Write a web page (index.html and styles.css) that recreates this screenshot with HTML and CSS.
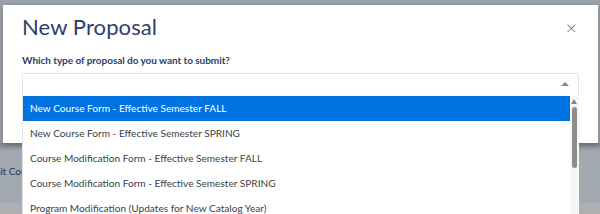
FILE: index.html
```html
<!DOCTYPE html>
<html lang="en">
<head>
  <meta charset="UTF-8">
  <meta name="viewport" content="width=device-width, initial-scale=1.0">
  <title>New Proposal</title>
  <link rel="stylesheet" href="styles.css">
</head>
<body>
  <!-- page behind the backdrop -->
  <div class="page">
    <div class="page-top"></div>
    <div class="page-row">
      <span class="page-link">Edit Course</span>
    </div>
    <div class="page-footer"></div>
  </div>

  <!-- modal -->
  <div class="modal">
    <div class="modal-header">
      <h1>New Proposal</h1>
      <span class="close">&times;</span>
    </div>
    <div class="modal-body">
      <label class="field-label">Which type of proposal do you want to submit?</label>
      <div class="select">
        <span class="select-arrow"></span>
      </div>
    </div>
  </div>

  <!-- open dropdown -->
  <div class="listbox">
    <ul class="options">
      <li class="option active">New Course Form - Effective Semester FALL</li>
      <li class="option">New Course Form - Effective Semester SPRING</li>
      <li class="option">Course Modification Form - Effective Semester FALL</li>
      <li class="option">Course Modification Form - Effective Semester SPRING</li>
      <li class="option">Program Modification (Updates for New Catalog Year)</li>
    </ul>
    <div class="scrollbar">
      <span class="scroll-up"></span>
      <span class="scroll-thumb"></span>
    </div>
  </div>
</body>
</html>
```

FILE: styles.css
```css
body {
  margin: 0;
  width: 600px;
  height: 214px;
  overflow: hidden;
  font-family: Lato, "Open Sans", sans-serif;
  background-color: #9ca2aa;
  position: relative;
}
.page {
  height: 214px;
  display: flex;
  flex-direction: column;
}
.page-top {
  height: 143px;
}
.page-row {
  height: 60px;
  background: linear-gradient(#7f858c, #a3a9b1 8px, #a3a9b1);
  padding-top: 22px;
  box-sizing: border-box;
}
.page-link {
  display: block;
  margin-left: -11px;
  font-size: 10px;
  color: #233552;
}
.page-footer {
  flex: 1;
  background-color: #aeafb1;
}
.modal {
  position: absolute;
  left: 3px;
  top: 5px;
  width: 595px;
  height: 138px;
  background-color: #fff;
  box-shadow: 0 2px 6px rgba(0, 0, 0, 0.25);
}
.modal-header {
  display: flex;
  justify-content: space-between;
  align-items: flex-start;
  padding: 9px 21px 0 19px;
}
h1 {
  margin: 0;
  font-size: 22px;
  font-weight: 400;
  letter-spacing: 0.1px;
  color: #2c3e6b;
  line-height: 26px;
}
.close {
  font-size: 20px;
  font-weight: 300;
  line-height: 20px;
  color: #777;
  margin-top: 3px;
}
.modal-body {
  padding: 14px 19px 0;
}
.field-label {
  display: block;
  font-size: 10px;
  font-weight: 700;
  letter-spacing: -0.05px;
  color: #2c3e6b;
  line-height: 12px;
  margin-bottom: 7px;
}
.select {
  position: relative;
  width: 557px;
  height: 23px;
  box-sizing: border-box;
  border: 1px solid #dfe3e8;
  border-bottom: none;
  border-radius: 3px 3px 0 0;
}
.select-arrow {
  position: absolute;
  right: 9px;
  top: 8px;
  border-left: 4px solid transparent;
  border-right: 4px solid transparent;
  border-bottom: 4px solid #888;
}
.listbox {
  position: absolute;
  left: 22px;
  top: 96px;
  width: 557px;
  height: 118px;
  display: flex;
  background-color: #fff;
  border-left: 1px solid #dfe3e8;
  box-sizing: border-box;
}
.options {
  list-style: none;
  margin: 0;
  padding: 0;
  flex: 1;
}
.option {
  height: 25px;
  line-height: 25px;
  padding-left: 7px;
  font-size: 10.1px;
  color: #3a3f47;
}
.option.active {
  background-color: #0073e1;
  color: #fff;
}
.scrollbar {
  width: 9px;
  background-color: #f6f6f6;
  position: relative;
}
.scroll-up {
  position: absolute;
  left: 1px;
  top: 3px;
  border-left: 3.5px solid transparent;
  border-right: 3.5px solid transparent;
  border-bottom: 5px solid #888;
}
.scroll-thumb {
  position: absolute;
  left: 1.5px;
  top: 11px;
  width: 5px;
  height: 61px;
  border-radius: 3px;
  background-color: #8d8d8d;
}
```
